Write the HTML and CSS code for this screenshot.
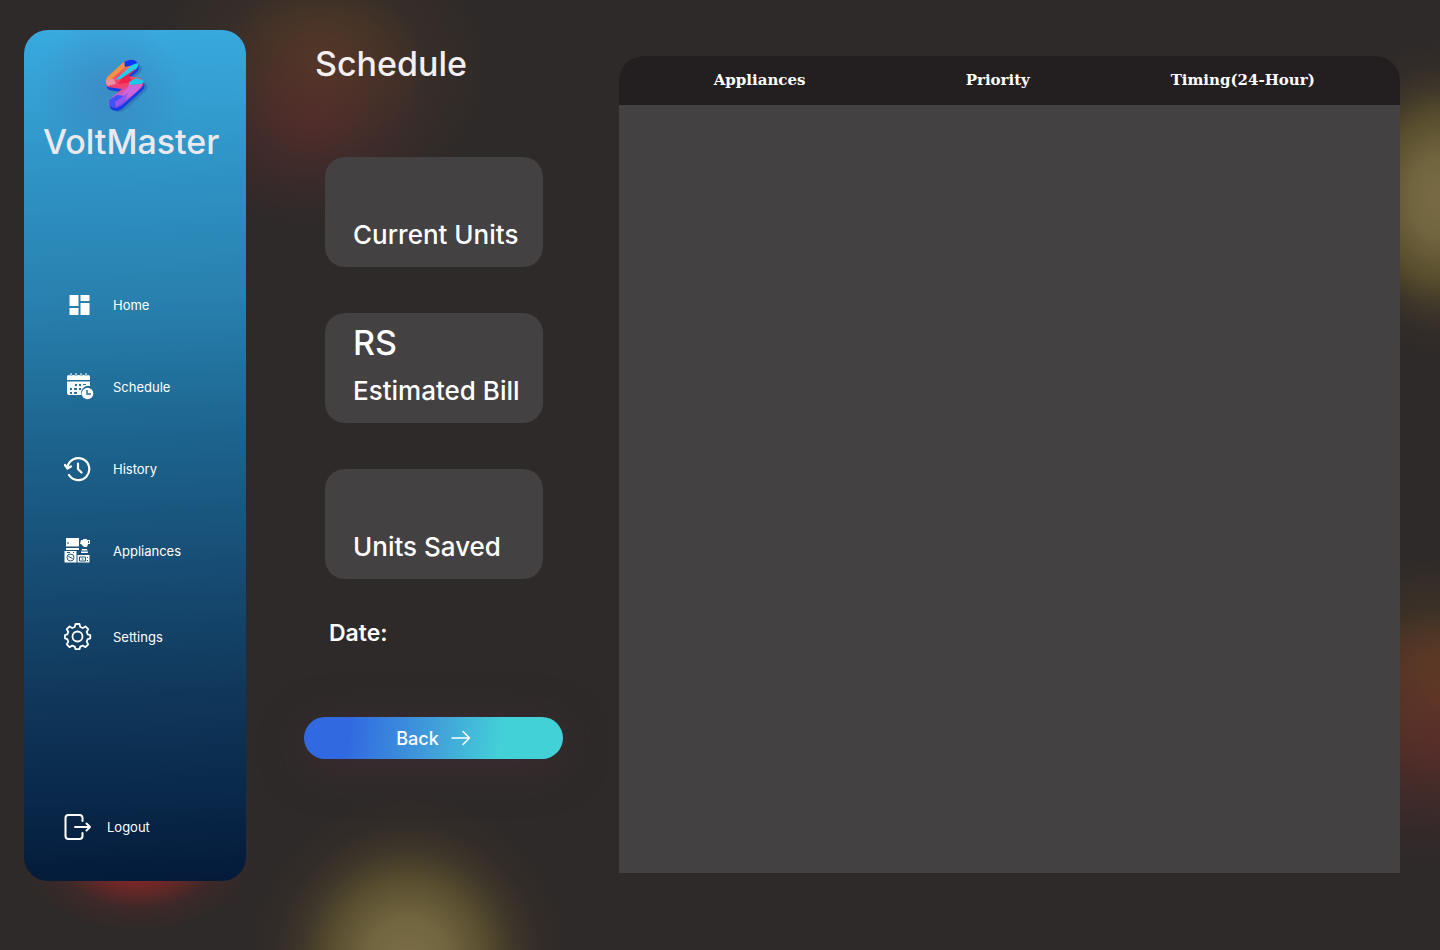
FILE: index.html
```html
<!DOCTYPE html>
<html lang="en">
<head>
<meta charset="utf-8">
<meta name="viewport" content="width=device-width, initial-scale=1">
<title>VoltMaster - Schedule</title>
<link rel="stylesheet" href="styles.css">
</head>
<body>
<div class="page">
  <aside class="sidebar">
    <div class="brand">
      <svg class="brand-logo" viewBox="0 0 46 56" aria-hidden="true">
        <defs>
          <linearGradient id="bolt" x1="0" y1="0" x2="0" y2="1">
            <stop offset="0" stop-color="#fb8b4c"/>
            <stop offset=".3" stop-color="#f2506a"/>
            <stop offset=".55" stop-color="#f0406c"/>
            <stop offset=".75" stop-color="#c760d8"/>
            <stop offset="1" stop-color="#5a3df4"/>
          </linearGradient>
          <path id="bolt-shape" d="M20 4Q27 0 32 3Q36 7 32 11L24 18L36 20Q42 23 38 29L17 48Q11 52 6 48Q3 44 7 40L18 31L4 29Q-1 25 4 18Z"/>
          <clipPath id="bolt-clip"><use href="#bolt-shape"/></clipPath>
        </defs>
        <use href="#bolt-shape" x="4" y="4" fill="#245b91" fill-opacity=".35"/>
        <use href="#bolt-shape" x="1" y="3" fill="#143fe0"/>
        <use href="#bolt-shape" fill="url(#bolt)"/>
        <g clip-path="url(#bolt-clip)">
          <path fill="#f49143" d="M0 22L20 3L24 6L6 23z"/>
          <path fill="#0b37fa" d="M20 2L30 -1L37 6L30 7L21 9z"/>
          <path fill="#17d3f2" d="M11 22L28 7L36 4L35 10L20 20z"/>
          <path fill="#ef244d" d="M18 20L31 11L34 11L25 19L30 24L14 26z"/>
          <path fill="#eb8fa5" d="M1 22L10 21L12 26L3 28z"/>
          <path fill="#16cbed" d="M25 24L32 20L42 23L37 26L25 27z"/>
          <path fill="#cb65d9" d="M25 27L39 26L33 34L20 42L17 38z"/>
          <path fill="#4251f5" d="M5 42L13 37L22 38L14 47L7 50z"/>
          <path fill="#9456ef" d="M11 44L24 35L22 41L12 50z"/>
        </g>
      </svg>
      <span class="brand-name">VoltMaster</span>
    </div>

    <nav class="nav" aria-label="Main">
      <ul class="nav-list">
        <li><a class="nav-link" href="#home">
          <svg class="icon" viewBox="0 0 28 28" fill="#fff" aria-hidden="true"><path d="M5.500 4h9v11h-9zM16.500 4h9v6h-9zM5.500 17h9v7h-9zM16.500 12h9v12h-9z"/></svg>
          <span>Home</span></a></li>
        <li><a class="nav-link" href="#schedule" aria-current="page">
          <svg class="icon icon-wide" viewBox="0 0 30 28" aria-hidden="true">
            <path fill="#fff" d="M3 7V4q0-2 2-2h19q2 0 2 2v3zM3 8.500h23V13a7 7 0 0 0-8.500 9H5q-2 0-2-2z"/>
            <g stroke="#24719d" stroke-width="2.400"><path d="M7 0v3M12 0v3M17 0v3M22 0v3"/></g>
            <g stroke="#fff" stroke-width="1.200" stroke-linecap="round"><path d="M7 .6v2M12 .6v2M17 .6v2M22 .6v2"/></g>
            <path fill="#24719d" d="M11 11h2v2h-2zM15 11h2v2h-2zM19 11h3v1h-3zM6 15h2v2H6zM10 15h3v2h-3zM15 15h2v2h-2zM6 19h2v2H6zM10 19h3v2h-3z"/>
            <circle cx="23.500" cy="20.500" r="5.800" fill="#fff"/>
            <path fill="none" stroke="#24719d" stroke-width="1.500" d="M23 17v4h4"/>
          </svg>
          <span>Schedule</span></a></li>
        <li><a class="nav-link" href="#history">
          <svg class="icon" viewBox="0 0 28 28" fill="none" stroke="#fff" stroke-width="2.200" stroke-linecap="round" stroke-linejoin="round" aria-hidden="true"><path d="M3.500 12A11 11 0 1 1 5 20M1 10l2.500 3.500L7 11.500M14 8.500V14l3.500 3.500"/></svg>
          <span>History</span></a></li>
        <li><a class="nav-link" href="#appliances">
          <svg class="icon" viewBox="0 0 28 28" aria-hidden="true">
            <path fill="#fff" d="M2 1h13v8.500H2zM2 11h13v2H2zM.5 14h12v11.500H.5zM13.500 18h12v7.500h-12zM17 3h2V2h4v1h3v4h-2l-1 3h-3l-3-3h-1zM18 12h5l1 4h-7z"/>
            <g stroke="#1a5680" fill="none"><circle cx="6.500" cy="20.500" r="3.500"/><path d="M4 5v2M3 15.500h3M9 15.500h1M4.500 19.500l4 2M15.500 20h6v4h-6zM17.500 22h2M23.500 20v1M23.500 23v1M24.500 4v2M17.500 14h6"/></g>
          </svg>
          <span>Appliances</span></a></li>
      </ul>
      <ul class="nav-list">
        <li><a class="nav-link" href="#settings">
          <svg class="icon" viewBox="0 0 28 28" fill="none" stroke="#fff" stroke-width="1.800" stroke-linejoin="round" aria-hidden="true"><circle cx="13.500" cy="13.500" r="5"/><path d="M11.500 1h4l.8 3 2.400 1 2.800-1.500 2.700 2.700L22.700 9l1 2.400 2.600.8v3.200l-2.600.8-1 2.400 1.500 2.800-2.700 2.700-2.800-1.500-2.400 1-.8 2.600h-4l-.8-2.600-2.400-1-2.800 1.500-2.700-2.700L4.300 18.600l-1-2.400L1 15.400v-3.200l2.300-.8 1-2.400L2.800 6.200l2.700-2.700L8.300 5l2.400-1z"/></svg>
          <span>Settings</span></a></li>
      </ul>
    </nav>

    <a class="nav-link logout" href="#logout">
      <svg class="icon" viewBox="0 0 28 28" fill="none" stroke="#fff" stroke-width="2" stroke-linecap="round" stroke-linejoin="round" aria-hidden="true"><path d="M18.500 8V5q0-3-3-3H4.500q-3 0-3 3v18q0 3 3 3h11q3 0 3-3v-3M11 14h15M22.500 10.500L26 14l-3.500 3.500"/></svg>
      <span>Logout</span>
    </a>
  </aside>

  <section class="summary">
    <h1 class="title">Schedule</h1>
    <div class="cards">
      <div class="card"><h2 class="card-label">Current Units</h2></div>
      <div class="card"><p class="card-value">RS</p><h2 class="card-label">Estimated Bill</h2></div>
      <div class="card"><h2 class="card-label">Units Saved</h2></div>
    </div>
    <p class="date">Date:</p>
    <button class="back" type="button">
      <span>Back</span>
      <svg class="arrow" viewBox="0 0 20 16" fill="none" stroke="#fff" stroke-width="1.500" stroke-linecap="round" stroke-linejoin="round" aria-hidden="true"><path d="M1 8h17M12 1.500L18.500 8 12 14.500"/></svg>
    </button>
  </section>

  <main class="panel">
    <table class="schedule">
      <thead>
        <tr>
          <th class="col-name" scope="col">Appliances</th>
          <th class="col-priority" scope="col">Priority</th>
          <th class="col-timing" scope="col">Timing(24-Hour)</th>
        </tr>
      </thead>
      <tbody></tbody>
    </table>
  </main>
</div>
</body>
</html>
```

FILE: styles.css
```css
* {
  box-sizing: border-box;
}

body {
  margin: 0;
  background: #2e2a29;
  color: #fff;
  font-family: Inter, "Liberation Sans", sans-serif;
}

h1, h2, p, ul {
  margin: 0;
  padding: 0;
}

.page {
  display: grid;
  grid-template-columns: 222px 261px minmax(0, 1fr);
  gap: 56px;
  min-height: 100vh;
  padding: 30px 40px 69px 24px;
  background:
    radial-gradient(ellipse 115px 75px at 138px 856px, #942626 0%, rgba(138, 38, 38, 0.8) 35%, rgba(90, 38, 38, 0.35) 70%, transparent 100%),
    radial-gradient(ellipse 160px 165px at 408px 960px, #7a6d48 0%, #72663f 25%, rgba(96, 84, 48, 0.85) 48%, rgba(80, 68, 42, 0.5) 66%, rgba(66, 52, 40, 0.25) 82%, transparent 100%),
    radial-gradient(ellipse 120px 160px at 1440px 198px, #786b44 0%, #71653f 25%, rgba(96, 84, 46, 0.85) 50%, rgba(80, 68, 42, 0.5) 68%, rgba(66, 52, 40, 0.25) 83%, transparent 100%),
    radial-gradient(ellipse 150px 120px at 1430px 748px, rgba(88, 38, 44, 0.6) 0%, rgba(74, 38, 44, 0.35) 50%, transparent 100%),
    radial-gradient(ellipse 150px 140px at 1440px 695px, #6c4023 0%, rgba(100, 62, 36, 0.85) 30%, rgba(80, 58, 36, 0.4) 62%, transparent 100%),
    radial-gradient(ellipse 130px 110px at 310px 120px, rgba(86, 42, 44, 0.7) 0%, rgba(72, 40, 44, 0.35) 55%, transparent 100%),
    radial-gradient(ellipse 170px 145px at 322px 68px, #5b3e26 0%, rgba(84, 58, 38, 0.75) 30%, rgba(66, 50, 40, 0.4) 62%, transparent 100%),
    #2e2a29;
}

.sidebar {
  display: flex;
  flex-direction: column;
  padding: 28px 19px 40px;
  border-radius: 24px;
  background:
    radial-gradient(circle at 86px 60px, rgba(72, 104, 170, 0.35) 0, transparent 75px),
    linear-gradient(178deg, #38aade 0%, #2f93c5 17%, #2880ae 32%, #1c648e 48%, #174d75 63%, #10375a 78%, #09284a 90%, #041a39 100%);
}

.brand {
  display: flex;
  flex-direction: column;
  align-items: flex-start;
}

.brand-logo {
  width: 46px;
  height: 56px;
  margin-left: 61px;
}

.brand-name {
  color: #ece9ee;
  font-size: 34px;
  font-weight: 500;
  line-height: 56px;
}

.nav {
  display: flex;
  flex-direction: column;
  gap: 58px;
  margin-top: 121px;
}

.nav-list {
  display: grid;
  gap: 54px;
  list-style: none;
}

.nav-link {
  display: flex;
  align-items: center;
  gap: 21px;
  padding-left: 21px;
  color: #fff;
  font-size: 13px;
  line-height: 28px;
  text-decoration: none;
}

.icon {
  width: 28px;
  height: 28px;
}

.icon-wide {
  width: 30px;
  margin-right: -2px;
}

.logout {
  gap: 15px;
  margin-top: auto;
}

.summary {
  display: flex;
  flex-direction: column;
  align-items: flex-start;
  padding-left: 2px;
}

.title {
  padding: 10px 0 0 11px;
  color: #f3eff0;
  font-size: 34px;
  font-weight: 500;
  line-height: 48px;
}

.cards {
  display: grid;
  grid-template-columns: 218px;
  gap: 46px;
  margin: 69px 0 0 21px;
}

.card {
  display: flex;
  flex-direction: column;
  height: 110px;
  padding: 10px 0 16px 28px;
  border-radius: 20px;
  background: #444142;
  white-space: nowrap;
}

.card-value {
  font-size: 34px;
  font-weight: 500;
  line-height: 40px;
}

.card-label {
  margin-top: auto;
  font-size: 26px;
  font-weight: 500;
  line-height: 32px;
}

.date {
  margin: 38px 0 0 25px;
  font-size: 23px;
  font-weight: 600;
  line-height: 32px;
}

.back {
  display: flex;
  align-items: center;
  justify-content: center;
  gap: 12px;
  width: 100%;
  height: 42px;
  margin-top: 68px;
  padding: 0;
  border: 0;
  border-radius: 21px;
  background: linear-gradient(98deg, #316ae0 18%, #42a2d9 52%, #43d1d8 76%);
  box-shadow: 0 8px 48px rgba(84, 45, 64, 0.4);
  color: #fff;
  font-family: inherit;
  font-size: 18px;
  font-weight: 500;
}

.arrow {
  width: 20px;
  height: 16px;
}

.panel {
  margin: 26px 0 8px;
  overflow: hidden;
  border-radius: 24px 24px 0 0;
  background: #444142;
}

.schedule {
  width: 100%;
  table-layout: fixed;
  border-collapse: collapse;
  background: #231f20;
}

.schedule th {
  height: 49px;
  padding: 0 0 2px;
  font-family: "DejaVu Serif", "Liberation Serif", serif;
  font-size: 15px;
  font-weight: 700;
  line-height: 20px;
}

.schedule .col-name {
  width: 36%;
}

.schedule .col-priority {
  width: 25%;
}

.schedule .col-timing {
  width: 39%;
  padding-right: 10px;
}
```
